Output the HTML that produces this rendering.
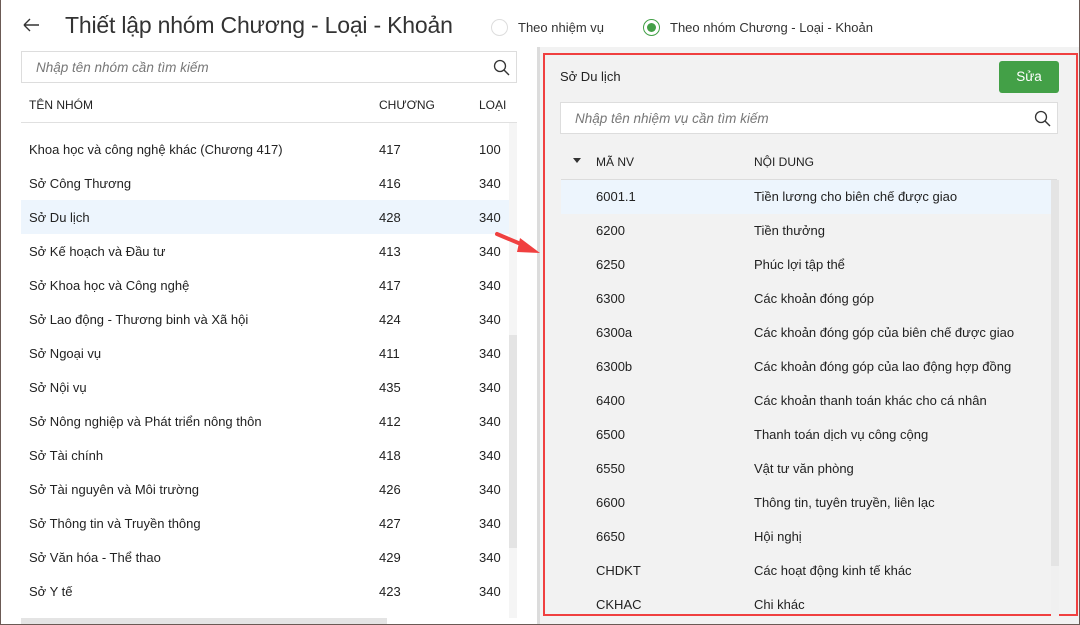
<!DOCTYPE html>
<html><head><meta charset="utf-8"><style>
*{box-sizing:border-box;margin:0;padding:0}
body{width:1080px;height:625px;overflow:hidden;background:#fff;font-family:"Liberation Sans",sans-serif;color:#212121;position:relative}
.frame{position:absolute;left:0;top:0;width:1080px;height:625px;border:1px solid #6b5a55;border-top:none;pointer-events:none;z-index:9}
.abs{position:absolute}
.title{left:65px;top:12px;font-size:23px;color:#333;letter-spacing:-0.2px}
.radio{width:17px;height:17px;border-radius:50%;border:1px solid #ddd;background:#fff}
.lbl{font-size:13px;color:#333}
.search{border:1px solid #ddd;background:#fff;height:32px}
.search i{position:absolute;left:14px;top:8px;font-size:13.5px;color:#777}
.row{position:absolute;font-size:13px;height:34px;line-height:34px;color:#222}
.hdr{font-size:12px;color:#222}
</style></head><body>
<div class="frame"></div>
<svg class="abs" style="left:22px;top:18px" width="18" height="14"><path d="M2 7H17M2 7L8 1M2 7L8 13" stroke="#333" stroke-width="1.4" fill="none"/></svg>
<div class="abs title">Thiết lập nhóm Chương - Loại - Khoản</div>
<div class="abs radio" style="left:491px;top:19px"></div>
<div class="abs lbl" style="left:518px;top:20px">Theo nhiệm vụ</div>
<div class="abs radio" style="left:643px;top:19px;border:1.5px solid #43a047"></div>
<div class="abs" style="left:647px;top:23px;width:9px;height:9px;border-radius:50%;background:#43a047"></div>
<div class="abs lbl" style="left:670px;top:20px">Theo nhóm Chương - Loại - Khoản</div>

<div class="abs search" style="left:21px;top:51px;width:496px"><i>Nhập tên nhóm cần tìm kiếm</i>
<svg class="abs" style="left:471px;top:7px" width="17" height="17"><circle cx="7" cy="7" r="5.5" stroke="#333" stroke-width="1.3" fill="none"/><path d="M11 11L16 16" stroke="#333" stroke-width="1.4"/></svg></div>
<div class="abs hdr" style="left:29px;top:98px">TÊN NHÓM</div>
<div class="abs hdr" style="left:379px;top:98px">CHƯƠNG</div>
<div class="abs hdr" style="left:479px;top:98px">LOẠI</div>
<div class="abs" style="left:21px;top:122px;width:496px;height:1px;background:#e0e0e0"></div>
<div class="abs" style="left:509px;top:123px;width:8px;height:495px;background:#f5f5f5"></div>
<div class="abs" style="left:509px;top:335px;width:8px;height:213px;background:#e4e4e4"></div>
<div class="abs" style="left:21px;top:618px;width:366px;height:6px;background:#e4e4e4"></div>
<div class="abs" style="left:21px;top:200px;width:488px;height:34px;background:#edf5fd"></div>
<div id="left"></div>

<div class="abs" style="left:537px;top:47px;width:543px;height:578px;background:#f2f2f2"></div>
<div class="abs" style="left:537px;top:47px;width:3px;height:578px;background:#dcdcdc"></div>
<div class="abs" style="left:543px;top:53px;width:535px;height:563px;border:2px solid #f04040"></div>
<div class="abs" style="left:560px;top:69px;font-size:13px;color:#222">Sở Du lịch</div>
<div class="abs" style="left:999px;top:61px;width:60px;height:32px;background:#43a047;border-radius:3px;color:#fff;font-size:13.5px;text-align:center;line-height:32px">Sửa</div>
<div class="abs search" style="left:560px;top:102px;width:498px"><i>Nhập tên nhiệm vụ cần tìm kiếm</i>
<svg class="abs" style="left:473px;top:7px" width="17" height="17"><circle cx="7" cy="7" r="5.5" stroke="#333" stroke-width="1.3" fill="none"/><path d="M11 11L16 16" stroke="#333" stroke-width="1.4"/></svg></div>
<svg class="abs" style="left:573px;top:158px" width="9" height="6"><path d="M0 0H8L4 5Z" fill="#333"/></svg>
<div class="abs hdr" style="left:596px;top:155px">MÃ NV</div>
<div class="abs hdr" style="left:754px;top:155px">NỘI DUNG</div>
<div class="abs" style="left:561px;top:179px;width:496px;height:1px;background:#dcdcdc"></div>
<div class="abs" style="left:1051px;top:180px;width:8px;height:436px;background:#f0f0f0"></div>
<div class="abs" style="left:1051px;top:180px;width:8px;height:386px;background:#e4e4e4"></div>
<div class="abs" style="left:561px;top:180px;width:490px;height:34px;background:#edf5fd"></div>
<div id="right"></div>

<svg class="abs" style="left:494px;top:228px" width="50" height="30"><path d="M3 6L34 19" stroke="#f04040" stroke-width="4" stroke-linecap="round"/><path d="M26 10L46 25L23 24Z" fill="#f04040"/></svg>
<script>
var L=[["Khoa học và công nghệ khác (Chương 417)","417","100"],["Sở Công Thương","416","340"],["Sở Du lịch","428","340"],["Sở Kế hoạch và Đầu tư","413","340"],["Sở Khoa học và Công nghệ","417","340"],["Sở Lao động - Thương binh và Xã hội","424","340"],["Sở Ngoại vụ","411","340"],["Sở Nội vụ","435","340"],["Sở Nông nghiệp và Phát triển nông thôn","412","340"],["Sở Tài chính","418","340"],["Sở Tài nguyên và Môi trường","426","340"],["Sở Thông tin và Truyền thông","427","340"],["Sở Văn hóa - Thể thao","429","340"],["Sở Y tế","423","340"]];
var h="";L.forEach(function(r,i){var y=133+i*34;h+='<div class="row" style="left:29px;top:'+y+'px">'+r[0]+'</div><div class="row" style="left:379px;top:'+y+'px">'+r[1]+'</div><div class="row" style="left:479px;top:'+y+'px">'+r[2]+'</div>';});
document.getElementById('left').innerHTML=h;
var R=[["6001.1","Tiền lương cho biên chế được giao"],["6200","Tiền thưởng"],["6250","Phúc lợi tập thể"],["6300","Các khoản đóng góp"],["6300a","Các khoản đóng góp của biên chế được giao"],["6300b","Các khoản đóng góp của lao động hợp đồng"],["6400","Các khoản thanh toán khác cho cá nhân"],["6500","Thanh toán dịch vụ công cộng"],["6550","Vật tư văn phòng"],["6600","Thông tin, tuyên truyền, liên lạc"],["6650","Hội nghị"],["CHDKT","Các hoạt động kinh tế khác"],["CKHAC","Chi khác"]];
h="";R.forEach(function(r,i){var y=180+i*34;h+='<div class="row" style="left:596px;top:'+y+'px">'+r[0]+'</div><div class="row" style="left:754px;top:'+y+'px">'+r[1]+'</div>';});
document.getElementById('right').innerHTML=h;
</script>
</body></html>
